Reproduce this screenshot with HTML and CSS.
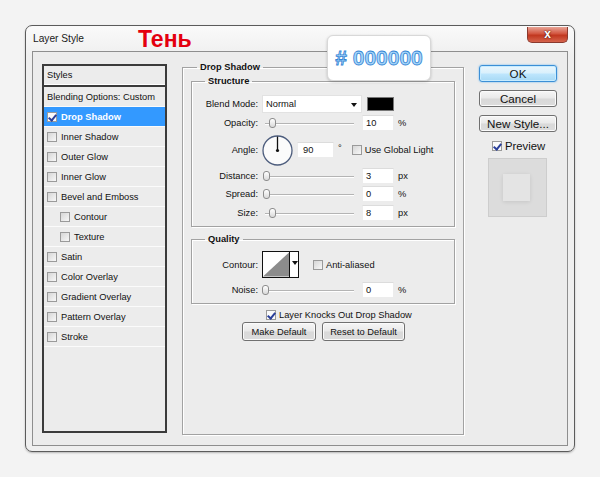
FILE: index.html
```html
<!DOCTYPE html>
<html lang="en">
<head>
    <meta charset="UTF-8">
    <title>Layer Style</title>
    <link rel="stylesheet" href="styles.css">
</head>
<body>
    <div class="dialog">
        <div class="titlebar">
            <span class="title">Layer Style</span>
            <span class="note">Тень</span>
            <div class="close">x</div>
        </div>

        <div class="badge">#&nbsp;000000</div>

        <div class="panel">
            <div class="styles-list">
                <div class="list-head">Styles</div>
                <div class="item">Blending Options: Custom</div>
                <div class="item selected"><span class="cb checked"></span><b>Drop Shadow</b></div>
                <div class="item"><span class="cb"></span>Inner Shadow</div>
                <div class="item"><span class="cb"></span>Outer Glow</div>
                <div class="item"><span class="cb"></span>Inner Glow</div>
                <div class="item"><span class="cb"></span>Bevel and Emboss</div>
                <div class="item sub"><span class="cb"></span>Contour</div>
                <div class="item sub"><span class="cb"></span>Texture</div>
                <div class="item"><span class="cb"></span>Satin</div>
                <div class="item"><span class="cb"></span>Color Overlay</div>
                <div class="item"><span class="cb"></span>Gradient Overlay</div>
                <div class="item"><span class="cb"></span>Pattern Overlay</div>
                <div class="item"><span class="cb"></span>Stroke</div>
            </div>

            <fieldset class="group main">
                <legend>Drop Shadow</legend>

                <fieldset class="group structure">
                    <legend>Structure</legend>
                    <div class="row blend-row">
                        <label>Blend Mode:</label>
                        <div class="select">Normal<span class="arrow"></span></div>
                        <div class="swatch"></div>
                    </div>
                    <div class="row">
                        <label>Opacity:</label>
                        <div class="slider"><span class="thumb" style="left: 7px"></span></div>
                        <div class="field">10</div>
                        <span class="unit">%</span>
                    </div>
                    <div class="row angle-row">
                        <label>Angle:</label>
                        <svg class="dial" width="31" height="31" viewBox="0 0 31 31">
                            <circle cx="15.5" cy="15.5" r="14.5" fill="#fbfbfb" stroke="#4d5d7d" stroke-width="1.3"/>
                            <line x1="15.5" y1="15.5" x2="15.5" y2="1.5" stroke="#111" stroke-width="1.3"/>
                            <circle cx="15.5" cy="15.5" r="1.6" fill="#111"/>
                        </svg>
                        <div class="field angle-field">90</div>
                        <span class="unit deg">°</span>
                        <span class="cb"></span>
                        <span class="cb-text">Use Global Light</span>
                    </div>
                    <div class="row">
                        <label>Distance:</label>
                        <div class="slider"><span class="thumb" style="left: 1px"></span></div>
                        <div class="field">3</div>
                        <span class="unit">px</span>
                    </div>
                    <div class="row">
                        <label>Spread:</label>
                        <div class="slider"><span class="thumb" style="left: 1px"></span></div>
                        <div class="field">0</div>
                        <span class="unit">%</span>
                    </div>
                    <div class="row size-row">
                        <label>Size:</label>
                        <div class="slider"><span class="thumb" style="left: 7px"></span></div>
                        <div class="field">8</div>
                        <span class="unit">px</span>
                    </div>
                </fieldset>

                <fieldset class="group quality">
                    <legend>Quality</legend>
                    <div class="row contour-row">
                        <label>Contour:</label>
                        <div class="contour">
                            <svg width="27" height="25" viewBox="0 0 27 25">
                                <rect width="27" height="25" fill="#fff"/>
                                <polygon points="0,25 27,0 27,25" fill="#8c8c8c"/>
                            </svg>
                            <span class="contour-arrow"></span>
                        </div>
                        <span class="cb"></span>
                        <span class="cb-text">Anti-aliased</span>
                    </div>
                    <div class="row noise-row">
                        <label>Noise:</label>
                        <div class="slider"><span class="thumb" style="left: 0px"></span></div>
                        <div class="field">0</div>
                        <span class="unit">%</span>
                    </div>
                </fieldset>

                <div class="knockout"><span class="cb checked"></span><span class="cb-text">Layer Knocks Out Drop Shadow</span></div>
                <div class="defaults">
                    <button class="btn small" style="width: 74px">Make Default</button>
                    <button class="btn small" style="width: 83px">Reset to Default</button>
                </div>
            </fieldset>

            <div class="actions">
                <button class="btn big ok">OK</button>
                <button class="btn big">Cancel</button>
                <button class="btn big">New Style...</button>
                <div class="preview-toggle"><span class="cb checked"></span>Preview</div>
                <div class="preview-box"><div class="preview-inner"></div></div>
            </div>
        </div>
    </div>
</body>
</html>
```

FILE: styles.css
```css
body {
    margin: 0;
    padding: 25px;
    background-color: #f3f3f3;
    font-family: "Liberation Sans", Arial, sans-serif;
    font-size: 9.3px;
    color: #111;
}
.dialog {
    position: relative;
    width: 548px;
    border: 1px solid #5b5b5b;
    border-radius: 7px;
    background: linear-gradient(#fafafa, #efefef 30px, #efefef);
    box-shadow: 0 1px 2px rgba(0, 0, 0, 0.25);
}
.titlebar {
    height: 25px;
    display: flex;
    align-items: center;
    padding-left: 7px;
}
.title {
    font-size: 10.2px;
    color: #1a1a1a;
}
.note {
    margin-left: 54px;
    font-size: 23px;
    font-weight: bold;
    color: #e4000f;
    line-height: 1;
    margin-top: 2px;
}
.close {
    margin-left: auto;
    margin-right: 6px;
    align-self: flex-start;
    margin-top: 1px;
    width: 41px;
    height: 16px;
    border: 1px solid #8a3a2e;
    border-top: none;
    border-radius: 0 0 5px 5px;
    box-sizing: border-box;
    background: linear-gradient(#e8a496, #d2553f 45%, #c1371f 55%, #d5634c);
    color: #fff;
    font-weight: bold;
    font-size: 12px;
    line-height: 14px;
    text-align: center;
    text-shadow: 0 0 2px #5a1a10, 0 0 1px #5a1a10;
}
.badge {
    position: absolute;
    left: 301px;
    top: 9px;
    width: 104px;
    height: 46px;
    box-sizing: border-box;
    background-color: #fff;
    border: 1px solid #d8d8d8;
    border-radius: 6px;
    box-shadow: 0 1px 3px rgba(0, 0, 0, 0.2);
    font-size: 21px;
    font-weight: bold;
    line-height: 44px;
    text-align: center;
    color: #a6d6fa;
    -webkit-text-stroke: 0.8px #3384d4;
    z-index: 2;
}
.panel {
    margin: 0 6px 5px;
    height: 395px;
    box-sizing: border-box;
    border: 1px solid #8e8e8e;
    background-color: #ececec;
    padding: 12px 0 0 9px;
    display: flex;
    align-items: flex-start;
}
.styles-list {
    width: 125px;
    height: 369px;
    box-sizing: border-box;
    border: 2px solid #3b3b3b;
    background-color: #ececec;
}
.list-head {
    height: 19px;
    line-height: 19px;
    padding-left: 3px;
    border-bottom: 2px solid #3b3b3b;
    box-shadow: inset 0 -1px 0 #fff;
}
.item {
    height: 19px;
    border-bottom: 1px solid #fbfbfb;
    display: flex;
    align-items: center;
    padding-left: 3px;
}
.item .cb {
    margin-right: 4px;
}
.item.sub {
    padding-left: 16px;
}
.item.selected {
    background-color: #3399ff;
    color: #fff;
}
.cb {
    display: inline-block;
    width: 10px;
    height: 10px;
    box-sizing: border-box;
    border: 1px solid #9a9a9a;
    background: linear-gradient(135deg, #d6d6d6, #f7f7f7);
    flex: none;
    position: relative;
}
.cb.checked {
    background: #fafafa;
}
.cb.checked::after {
    content: "";
    position: absolute;
    left: 2px;
    top: 0px;
    width: 3px;
    height: 6px;
    border-right: 2px solid #2a3f9a;
    border-bottom: 2px solid #2a3f9a;
    transform: rotate(40deg);
}
fieldset.group {
    margin: 0;
    border: 1px solid #a2a2a2;
    box-shadow: 1px 1px 0 #fff, inset 1px 1px 0 #fff;
}
fieldset.group legend {
    font-weight: bold;
    line-height: 11px;
    padding: 0 3px;
}
.main {
    width: 282px;
    height: 373px;
    box-sizing: border-box;
    margin: -2px 0 0 15px !important;
    padding: 0 8px;
}
.main > legend {
    margin-left: 6px;
}
.structure {
    margin-top: 3px !important;
    padding: 0 0 5px;
}
.structure legend,
.quality legend {
    margin-left: 13px;
}
.quality {
    margin-top: 7px !important;
    padding: 0 0 5px;
}
.row {
    display: flex;
    align-items: center;
    height: 16px;
    margin-top: 2px;
}
.row label {
    width: 66px;
    margin-right: 4px;
    text-align: right;
    flex: none;
}
.blend-row {
    height: 18px;
    margin-top: 8px;
}
.angle-row {
    height: 32px;
    margin-top: 3px;
}
.size-row {
    margin-top: 3px;
}
.select {
    width: 100px;
    height: 18px;
    box-sizing: border-box;
    background-color: #fff;
    border: 1px solid #e2e2e2;
    padding-left: 3px;
    line-height: 17px;
    position: relative;
}
.arrow {
    position: absolute;
    right: 4px;
    top: 7px;
    border-left: 3px solid transparent;
    border-right: 3px solid transparent;
    border-top: 4px solid #111;
}
.swatch {
    width: 27px;
    height: 14px;
    margin-left: 5px;
    box-sizing: border-box;
    background-color: #000;
    border: 1px solid #777;
}
.slider {
    width: 96px;
    height: 16px;
    position: relative;
    margin-right: 4px;
}
.slider::before {
    content: "";
    position: absolute;
    left: 3px;
    right: 4px;
    top: 8px;
    height: 1px;
    background-color: #b4b4b4;
    box-shadow: 0 1px 0 #fff;
}
.thumb {
    position: absolute;
    top: 3px;
    width: 7px;
    height: 10px;
    box-sizing: border-box;
    border: 1px solid #8d8d8d;
    border-radius: 3px;
    background: linear-gradient(#ffffff, #d9d9d9);
}
.field {
    width: 32px;
    height: 16px;
    box-sizing: border-box;
    background-color: #fff;
    border: 1px solid #ececec;
    border-top-color: #dcdcdc;
    padding-left: 3px;
    line-height: 15px;
}
.unit {
    margin-left: 4px;
}
.dial {
    margin-right: 4px;
    flex: none;
}
.angle-field {
    width: 37px;
    padding-left: 5px;
}
.deg {
    margin-left: 4px;
    margin-right: 10px;
    margin-top: -4px;
}
.cb-text {
    margin-left: 3px;
}
.contour-row {
    height: 27px;
    margin-top: 6px;
}
.noise-row {
    margin-top: 4px;
}
.contour {
    display: flex;
    width: 37px;
    height: 27px;
    box-sizing: border-box;
    border: 1px solid #111;
    background-color: #fff;
    margin-right: 14px;
}
.contour svg {
    display: block;
    border-right: 1px solid #111;
}
.contour-arrow {
    margin: 9px 0 0 2px;
    border-left: 3px solid transparent;
    border-right: 3px solid transparent;
    border-top: 4px solid #111;
    height: 0;
}
.knockout {
    display: flex;
    align-items: center;
    height: 11px;
    margin: 5px 0 0 75px;
}
.defaults {
    display: flex;
    gap: 6px;
    margin: 2px 0 0 51px;
}
.btn {
    font-family: "Liberation Sans", Arial, sans-serif;
    color: #111;
    border: 1px solid #707070;
    border-radius: 3px;
    background: linear-gradient(#f6f6f6, #e9e9e9 48%, #d9d9d9 52%, #dcdcdc);
    box-shadow: inset 0 0 0 1px #fbfbfb;
    padding: 0;
    cursor: pointer;
}
.btn.small {
    height: 19px;
    font-size: 9.3px;
}
.actions {
    width: 78px;
    margin: 1px 0 0 15px;
    display: flex;
    flex-direction: column;
    align-items: flex-start;
}
.btn.big {
    width: 78px;
    height: 17px;
    font-size: 11.6px;
    line-height: 15px;
    margin-bottom: 8px;
}
.btn.ok {
    border-color: #3c8fd6;
    background: linear-gradient(#eaf6fd, #d9f0fc 48%, #bee6fd 52%, #a7d9f5);
    box-shadow: inset 0 0 0 1px #c8ecff, 0 0 2px #5ab0f0;
}
.preview-toggle {
    display: flex;
    align-items: center;
    font-size: 11.3px;
    margin: 0 0 0 13px;
    height: 12px;
}
.preview-toggle .cb {
    margin-right: 3px;
}
.preview-box {
    width: 59px;
    height: 59px;
    box-sizing: border-box;
    margin: 6px 0 0 9px;
    background-color: #dcdcdc;
    border: 1px solid #cdcdcd;
    padding: 15px 0 0 14px;
}
.preview-inner {
    width: 27px;
    height: 27px;
    background-color: #e4e4e4;
    box-shadow: 0 1px 4px rgba(0, 0, 0, 0.1);
}
```
